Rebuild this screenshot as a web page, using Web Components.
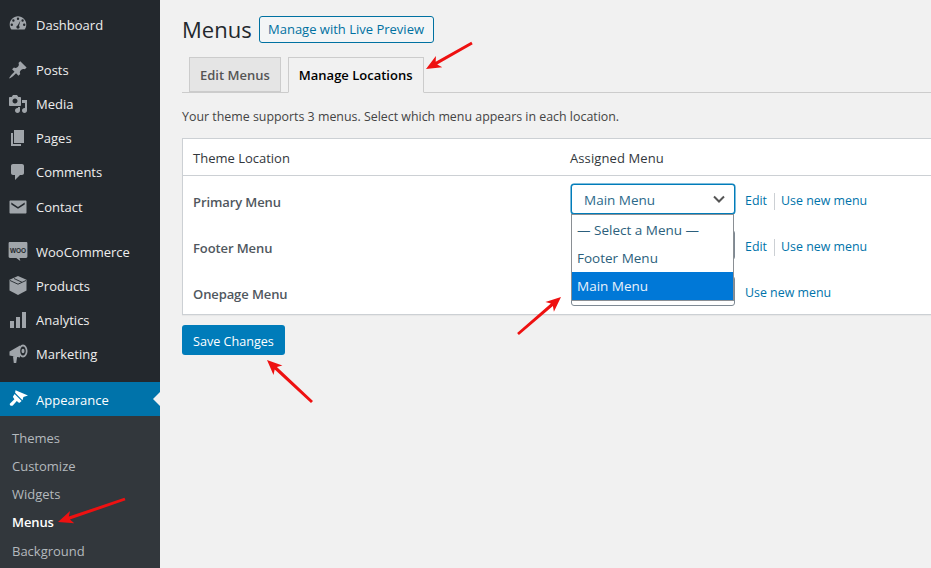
<!DOCTYPE html>
<html>
<head>
<meta charset="utf-8">
<title>Menus</title>
<style>
  html, body { margin: 0; height: 100%; overflow: hidden; }
  body { background: #f1f1f1; font: 13px/1.4 "Open Sans", "Noto Sans", "Liberation Sans", sans-serif; color: #444; }
</style>
</head>
<body>
<wp-admin>
  <wp-sidebar slot="side">
    <wp-item icon="dashboard">Dashboard</wp-item>
    <wp-item icon="post" gap="11">Posts</wp-item>
    <wp-item icon="media">Media</wp-item>
    <wp-item icon="page">Pages</wp-item>
    <wp-item icon="comments">Comments</wp-item>
    <wp-item icon="email" gap="1">Contact</wp-item>
    <wp-item icon="woo" gap="11">WooCommerce</wp-item>
    <wp-item icon="box">Products</wp-item>
    <wp-item icon="chart">Analytics</wp-item>
    <wp-item icon="megaphone">Marketing</wp-item>
    <wp-item icon="brush" gap="11" active>Appearance</wp-item>
    <wp-submenu>
      <wp-subitem>Themes</wp-subitem>
      <wp-subitem>Customize</wp-subitem>
      <wp-subitem>Widgets</wp-subitem>
      <wp-subitem current>Menus</wp-subitem>
      <wp-subitem gap="1">Background</wp-subitem>
    </wp-submenu>
  </wp-sidebar>
  <menu-page>
    <span slot="title">Menus</span>
    <span slot="action">Manage with Live Preview</span>
    <nav-tab slot="tabs">Edit Menus</nav-tab>
    <nav-tab slot="tabs" active>Manage Locations</nav-tab>
    <span slot="intro">Your theme supports 3 menus. Select which menu appears in each location.</span>
    <location-table slot="table">
      <location-row label="Primary Menu" edit>
        <wp-select open value="Main Menu"></wp-select>
      </location-row>
      <location-row label="Footer Menu" edit>
        <wp-select></wp-select>
      </location-row>
      <location-row label="Onepage Menu">
        <wp-select></wp-select>
      </location-row>
    </location-table>
    <save-button slot="save">Save Changes</save-button>
  </menu-page>
</wp-admin>
<red-arrow from="472,43" to="426,69"></red-arrow>
<red-arrow from="125,499" to="58,522"></red-arrow>
<red-arrow from="518,334" to="561,297"></red-arrow>
<red-arrow from="312,402" to="267,360"></red-arrow>

<script>
// dashicon style glyphs, all on a 20x20 box
var ICONS = {
  dashboard: '<path transform="translate(0 -2)" fill-rule="evenodd" d="M10 3.200c-4.600 0-8.300 3.700-8.300 8.200 0 1.900.6 3.600 1.700 5h13.200c1.100-1.400 1.700-3.100 1.700-5 0-4.500-3.700-8.200-8.300-8.200zM10 4.500a1.200 1.200 0 1 1 0 2.400 1.200 1.200 0 0 1 0-2.400zM5.400 6.300a1.200 1.200 0 1 1 0 2.400 1.200 1.200 0 0 1 0-2.400zM14.600 6.300a1.200 1.200 0 1 1 0 2.400 1.200 1.200 0 0 1 0-2.400zM3.800 10.500a1.200 1.200 0 1 1 0 2.400 1.200 1.200 0 0 1 0-2.400zM16.200 10.500a1.200 1.200 0 1 1 0 2.400 1.200 1.200 0 0 1 0-2.400zM12.400 7.600l-1.400 5.300a1.600 1.600 0 0 1 .6 1.200c0 .9-.7 1.600-1.600 1.600s-1.600-.7-1.600-1.600c0-.8.5-1.400 1.200-1.600z"/>',
  post: '<path d="M10.440 3.020l1.820-1.820 6.360 6.350-1.830 1.820c-1.050-.68-2.480-.57-3.410.36l-.75.75c-.92.93-1.040 2.350-.35 3.410l-1.830 1.820-2.410-2.410-2.800 2.790c-.42.42-3.380 2.710-3.800 2.290s1.860-3.390 2.280-3.810l2.790-2.790L4.100 9.360l1.830-1.820c1.050.69 2.480.57 3.400-.36l.75-.75c.93-.92 1.050-2.350.36-3.410z"/>',
  media: '<path fill-rule="evenodd" d="M13 11V4c0-.55-.45-1-1-1h-1.670L9 1H5L3.670 3H2c-.55 0-1 .45-1 1v7c0 .55.45 1 1 1h10c.55 0 1-.45 1-1zM7 4.500c1.380 0 2.500 1.120 2.500 2.500S8.380 9.500 7 9.500 4.500 8.380 4.500 7 5.620 4.500 7 4.500zM14 6h5v10.500c0 1.380-1.120 2.500-2.500 2.500S14 17.880 14 16.500s1.120-2.500 2.500-2.500c.17 0 .34.020.5.050V9h-3V6zm-4 8.050V13h2v3.500c0 1.380-1.120 2.500-2.500 2.500S7 17.880 7 16.500 8.120 14 9.500 14c.17 0 .34.020.5.050z"/>',
  page: '<path d="M6 15V2h10v13H6zm-1 1h8v2H3V5h2v11z"/>',
  comments: '<path d="M5 2h9c1.100 0 2 .9 2 2v7c0 1.100-.9 2-2 2h-2l-5 5v-5H5c-1.100 0-2-.9-2-2V4c0-1.100.9-2 2-2z"/>',
  email: '<path fill-rule="evenodd" d="M2.500 3.500h15c.6 0 1 .4 1 1v11c0 .6-.4 1-1 1h-15c-.6 0-1-.4-1-1v-11c0-.6.4-1 1-1zM3.300 5.500v1.900l6.700 4.400 6.700-4.400V5.500l-6.700 4.400z"/>',
  woo: '<path d="M2 0h16c.9 0 1.400.5 1.400 1.400v13.200c0 .9-.5 1.400-1.400 1.400h-6.500l.8 3-4-3H2c-.9 0-1.400-.5-1.400-1.400V1.400C.6.5 1.100 0 2 0z"/>' +
       '<text x="10" y="10.500" text-anchor="middle" font-size="6.500" font-weight="700" fill="#23282d" font-family="Liberation Sans, sans-serif">WOO</text>',
  box: '<path d="M10 0l8.500 3.800v10.800L10 19l-8.500-4.400V3.800z"/><path d="M2 4.500l8 3.700 8-3.700M6 2.500l8 3.800" fill="none" stroke="#23282d" stroke-width=".9"/>',
  chart: '<path d="M2 11h4v7H2zM8 7h4v11H8zM14 2h4v16h-4z"/>',
  megaphone: '<path d="M1.500 7.500L12 1.500v12L1.500 11.500zM5 12.500h4.200l-1 6.500H5.800z"/><path fill-rule="evenodd" d="M15 .5c2.500 0 4.500 3 4.500 6.500s-2 6.500-4.500 6.500-4.500-3-4.500-6.500S12.500.5 15 .5zM15 2.500c-1.500 0-2.800 2-2.800 4.500s1.300 4.500 2.800 4.500 2.800-2 2.800-4.500-1.300-4.500-2.800-4.500z"/><ellipse cx="15" cy="7" rx="1.500" ry="2.300"/>',
  brush: '<path d="M7.500 1.200L20 6.500l-4.600 1.400-.9 3.300-7.400-7.400z"/><path d="M6.600 4.900l7 7-1.700 1.500c-.4.300-.9.300-1.300 0L8.800 12l-4 4.400c-1.100 1.100-3.600-.1-3-1.700l4.600-4.500-1.300-1.900c-.3-.4-.2-.8.100-1.100z"/>'
};

function shadow(el, html) {
  el.attachShadow({ mode: "open" }).innerHTML = html;
}

class WpAdmin extends HTMLElement {
  constructor() {
    super();
    shadow(this, `<style>
      :host { display: flex; height: 568px; }
      ::slotted(menu-page) { flex: 1; min-width: 0; }
    </style><slot name="side"></slot><slot></slot>`);
  }
}

class WpSidebar extends HTMLElement {
  constructor() {
    super();
    shadow(this, `<style>
      :host { display: flex; flex-direction: column; flex: none; width: 160px; height: 568px;
        padding-top: 8px; box-sizing: border-box; background: #23282d; overflow: hidden; }
    </style><slot></slot>`);
  }
}

class WpItem extends HTMLElement {
  constructor() {
    super();
    var on = this.hasAttribute("active");
    shadow(this, `<style>
      :host { display: flex; align-items: center; height: 34px; position: relative; flex: none;
        margin-top: ${this.getAttribute("gap") || 0}px; color: ${on ? "#fff" : "#eee"}; font-size: 13px;
        background: ${on ? "#0073aa" : "transparent"}; }
      span { ${on ? "padding-top: 2px;" : ""} }
      svg { width: 20px; height: 20px; margin: 0 8px; fill: ${on ? "#fff" : "#a0a5aa"}; flex: none; overflow: visible; }
      i { position: absolute; right: 0; top: 10px; border: 7px solid transparent; border-right-color: #f1f1f1; border-left-width: 0; }
    </style><svg viewBox="0 0 20 20">${ICONS[this.getAttribute("icon")]}</svg><span><slot></slot></span>${on ? "<i></i>" : ""}`);
  }
}

class WpSubmenu extends HTMLElement {
  constructor() {
    super();
    shadow(this, `<style>
      :host { display: block; background: #32373c; padding: 8px 0; flex: 1; }
    </style><slot></slot>`);
  }
}

class WpSubitem extends HTMLElement {
  constructor() {
    super();
    var cur = this.hasAttribute("current");
    shadow(this, `<style>
      :host { display: flex; align-items: center; height: 28px; padding-left: 12px; font-size: 13px;
        margin-top: ${this.getAttribute("gap") || 0}px;
        color: ${cur ? "#fff" : "#b4b9be"}; font-weight: ${cur ? 600 : 400}; letter-spacing: ${cur ? "-.1px" : "0"}; }
    </style><slot></slot>`);
  }
}

class MenuPage extends HTMLElement {
  constructor() {
    super();
    shadow(this, `<style>
      :host { display: block; padding: 16px 0 0 22px; overflow: hidden; }
      .head { display: flex; align-items: center; height: 27px; }
      h1 { margin: 0; width: 77px; font-size: 22px; font-weight: 400; color: #23282d; line-height: 27px; }
      .action { display: flex; align-items: center; height: 27px; box-sizing: border-box; padding: 0 9px 0 8px;
        border: 1px solid #0071a1; border-radius: 3px; background: #f3f5f6; color: #0071a1; font-size: 13px; font-weight: 500; }
      .tabs { display: flex; gap: 7px; margin-top: 14px; padding-left: 7px; height: 35px; border-bottom: 1px solid #ccc; }
      .intro { margin-top: 15px; height: 18px; line-height: 18px; font-size: 12.400px; color: #444; white-space: nowrap; }
      .table { margin-top: 12px; margin-right: -4px; }
      .save { margin-top: 10px; display: flex; }
    </style>
    <div class="head"><h1><slot name="title"></slot></h1><div class="action"><slot name="action"></slot></div></div>
    <div class="tabs"><slot name="tabs"></slot></div>
    <div class="intro"><slot name="intro"></slot></div>
    <div class="table"><slot name="table"></slot></div>
    <div class="save"><slot name="save"></slot></div>`);
  }
}

class NavTab extends HTMLElement {
  constructor() {
    super();
    var on = this.hasAttribute("active");
    shadow(this, `<style>
      :host { display: flex; align-items: center; padding: ${on ? 0 : 1}px 10px 0; box-sizing: border-box; height: ${on ? 36 : 35}px;
        border: 1px solid #ccc; ${on ? "border-bottom-color: #f1f1f1;" : ""}
        background: ${on ? "#f1f1f1" : "#e5e5e5"}; color: ${on ? "#000" : "#555"}; font-size: 13px; font-weight: 600; }
    </style><slot></slot>`);
  }
}

class LocationTable extends HTMLElement {
  constructor() {
    super();
    shadow(this, `<style>
      :host { display: block; background: #fff; border: 1px solid #ccd0d4; box-shadow: 0 1px 1px rgba(0,0,0,.04); }
      .top { display: grid; grid-template-columns: 377px 1fr; height: 34px; padding-top: 2px; align-items: center;
        padding-left: 10px; border-bottom: 1px solid #ccd0d4; font-size: 13px; color: #32373c; }
      .top span:last-child { letter-spacing: .1px; }
      .rows { height: 138px; }
    </style>
    <div class="top"><span>Theme Location</span><span>Assigned Menu</span></div>
    <div class="rows"><slot></slot></div>`);
  }
}

class LocationRow extends HTMLElement {
  constructor() {
    super();
    var links = this.hasAttribute("edit")
      ? '<a>Edit</a><b></b><a>Use new menu</a>'
      : '<a>Use new menu</a>';
    shadow(this, `<style>
      :host { display: grid; grid-template-columns: 388px 164px 1fr; height: 46px; box-sizing: border-box; padding-top: 8px; }
      .label { padding: 8px 0 0 10px; font-size: 13px; font-weight: 600; color: #50575e; line-height: 20px; letter-spacing: -.1px; }
      .links { display: flex; align-items: center; height: 34px; padding-left: 10px; font-size: 12.400px; color: #0073aa; }
      b { width: 1px; height: 17px; background: #ccd0d4; margin: 0 6px 0 7px; }
    </style>
    <div class="label">${this.getAttribute("label")}</div>
    <slot></slot>
    <div class="links">${links}</div>`);
  }
}

class WpSelect extends HTMLElement {
  constructor() {
    super();
    var open = this.hasAttribute("open");
    var popup = open ? `<div class="pop">
        <div>— Select a Menu —</div><div>Footer Menu</div><div class="sel">Main Menu</div>
      </div>` : "";
    shadow(this, `<style>
      :host { display: block; position: relative; z-index: ${open ? 2 : 1}; width: 164px; height: 30px; font-size: 13.500px; color: #32373c; }
      .box { display: flex; align-items: center; justify-content: space-between; height: 30px; box-sizing: border-box;
        padding: 2px 8px 0 12px; background: #fff; border: 1px solid ${open ? "#007cba" : "#7e8993"}; border-radius: 3px;
        ${open ? "box-shadow: 0 0 0 .5px #007cba; color: #2c6a8a;" : ""} }
      svg { width: 14px; height: 14px; margin-top: -2px; fill: none; stroke: #555; stroke-width: 2; }
      .pop { position: absolute; left: 0; top: 30px; width: 163px; height: 87px; box-sizing: border-box;
        padding-top: 1px; background: #fff; border: 1px solid #8a8f94; color: #2c5f7c; }
      .pop div { height: 28px; line-height: 28px; padding-left: 5px; white-space: nowrap; }
      .pop .sel { background: #0078d7; color: #e8f2fb; }
    </style>
    <div class="box"><span>${this.getAttribute("value") || ""}</span>
      <svg viewBox="0 0 14 14"><path d="M2 4.500l5 5 5-5"/></svg></div>${popup}`);
  }
}

class SaveButton extends HTMLElement {
  constructor() {
    super();
    shadow(this, `<style>
      :host { display: flex; align-items: center; height: 30px; box-sizing: border-box; padding: 3px 11px 0; background: #007cba; color: #fff;
        border-radius: 3px; font-size: 12.600px; }
    </style><slot></slot>`);
  }
}

// annotation arrow drawn over the page, from the tail to the tip
class RedArrow extends HTMLElement {
  constructor() {
    super();
    var a = this.getAttribute("from").split(",").map(Number);
    var b = this.getAttribute("to").split(",").map(Number);
    var dx = b[0] - a[0], dy = b[1] - a[1], len = Math.hypot(dx, dy);
    var ux = dx / len, uy = dy / len, nx = -uy, ny = ux;
    var pt = function (along, side) {
      return (b[0] - ux * along + nx * side).toFixed(1) + "," + (b[1] - uy * along + ny * side).toFixed(1);
    };
    var pts = [pt(0, 0), pt(15, 6.5), pt(12, 1.6), pt(len, 1.4), pt(len, -1.4), pt(12, -1.6), pt(15, -6.5)].join(" ");
    shadow(this, `<style>
      :host { position: absolute; left: 0; top: 0; width: 931px; height: 568px; pointer-events: none; z-index: 5; }
      svg { display: block; }
    </style><svg width="931" height="568"><polygon points="${pts}" fill="#ee1111"/></svg>`);
  }
}

customElements.define("wp-admin", WpAdmin);
customElements.define("wp-sidebar", WpSidebar);
customElements.define("wp-item", WpItem);
customElements.define("wp-submenu", WpSubmenu);
customElements.define("wp-subitem", WpSubitem);
customElements.define("menu-page", MenuPage);
customElements.define("nav-tab", NavTab);
customElements.define("location-table", LocationTable);
customElements.define("location-row", LocationRow);
customElements.define("wp-select", WpSelect);
customElements.define("save-button", SaveButton);
customElements.define("red-arrow", RedArrow);
</script>
</body>
</html>
